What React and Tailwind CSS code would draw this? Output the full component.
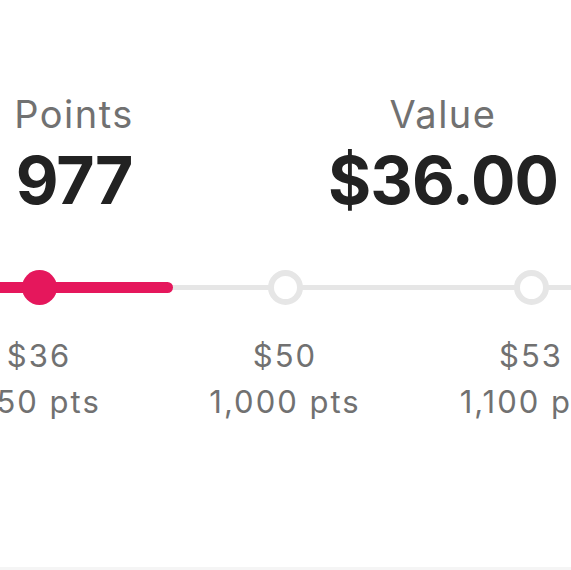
const ticks = [
  { value: "$36", pts: "750 pts" },
  { value: "$50", pts: "1,000 pts" },
  { value: "$53", pts: "1,100 pts" },
];

const App = () => {
  return (
    <div
      className="w-[571px] h-[570px] bg-white overflow-hidden flex flex-col"
      style={{ fontFamily: "Inter, 'Noto Sans', sans-serif" }}
    >
      {/* summary */}
      <div className="flex justify-between pt-[91px]">
        <div className="w-[148px] flex flex-col items-center">
          <span className="text-[38px] leading-[46px] text-[#717171] tracking-[1.5px]">Points</span>
          <span className="mt-[10px] text-[66px] leading-[66px] font-bold text-[#222222] tracking-[-1px]">
            977
          </span>
        </div>
        <div className="w-[256px] flex flex-col items-center">
          <span className="text-[38px] leading-[46px] text-[#717171] tracking-[1.5px]">Value</span>
          <span className="mt-[10px] text-[66px] leading-[66px] font-bold text-[#222222] tracking-[-1px]">
            $36.00
          </span>
        </div>
      </div>

      {/* slider */}
      <div className="mt-[56px] relative h-[36px] flex items-center">
        <div className="absolute left-0 right-0 h-[5px] bg-[#e6e6e6]" />
        <div className="absolute left-0 w-[173px] h-[11px] bg-[#e5175c] rounded-r-full" />
        <div className="relative flex ml-[-84px]">
          {ticks.map((t, i) => (
            <div key={t.value} className="w-[246px] shrink-0 flex justify-center">
              {i === 0 ? (
                <div className="w-[35px] h-[35px] rounded-full bg-[#e5175c]" />
              ) : (
                <div className="w-[35px] h-[35px] rounded-full bg-white border-[6px] border-[#e6e6e6]" />
              )}
            </div>
          ))}
        </div>
      </div>

      {/* tick labels */}
      <div className="mt-[28px] flex ml-[-84px]">
        {ticks.map((t) => (
          <div
            key={t.value}
            className="w-[246px] shrink-0 flex flex-col items-center text-[31px] leading-[46px] tracking-[2px] text-[#717171]"
          >
            <span>{t.value}</span>
            <span className="whitespace-nowrap">{t.pts}</span>
          </div>
        ))}
      </div>

      <div className="mt-auto h-[3px] bg-[#f5f5f5]" />
    </div>
  );
};

export default App;
